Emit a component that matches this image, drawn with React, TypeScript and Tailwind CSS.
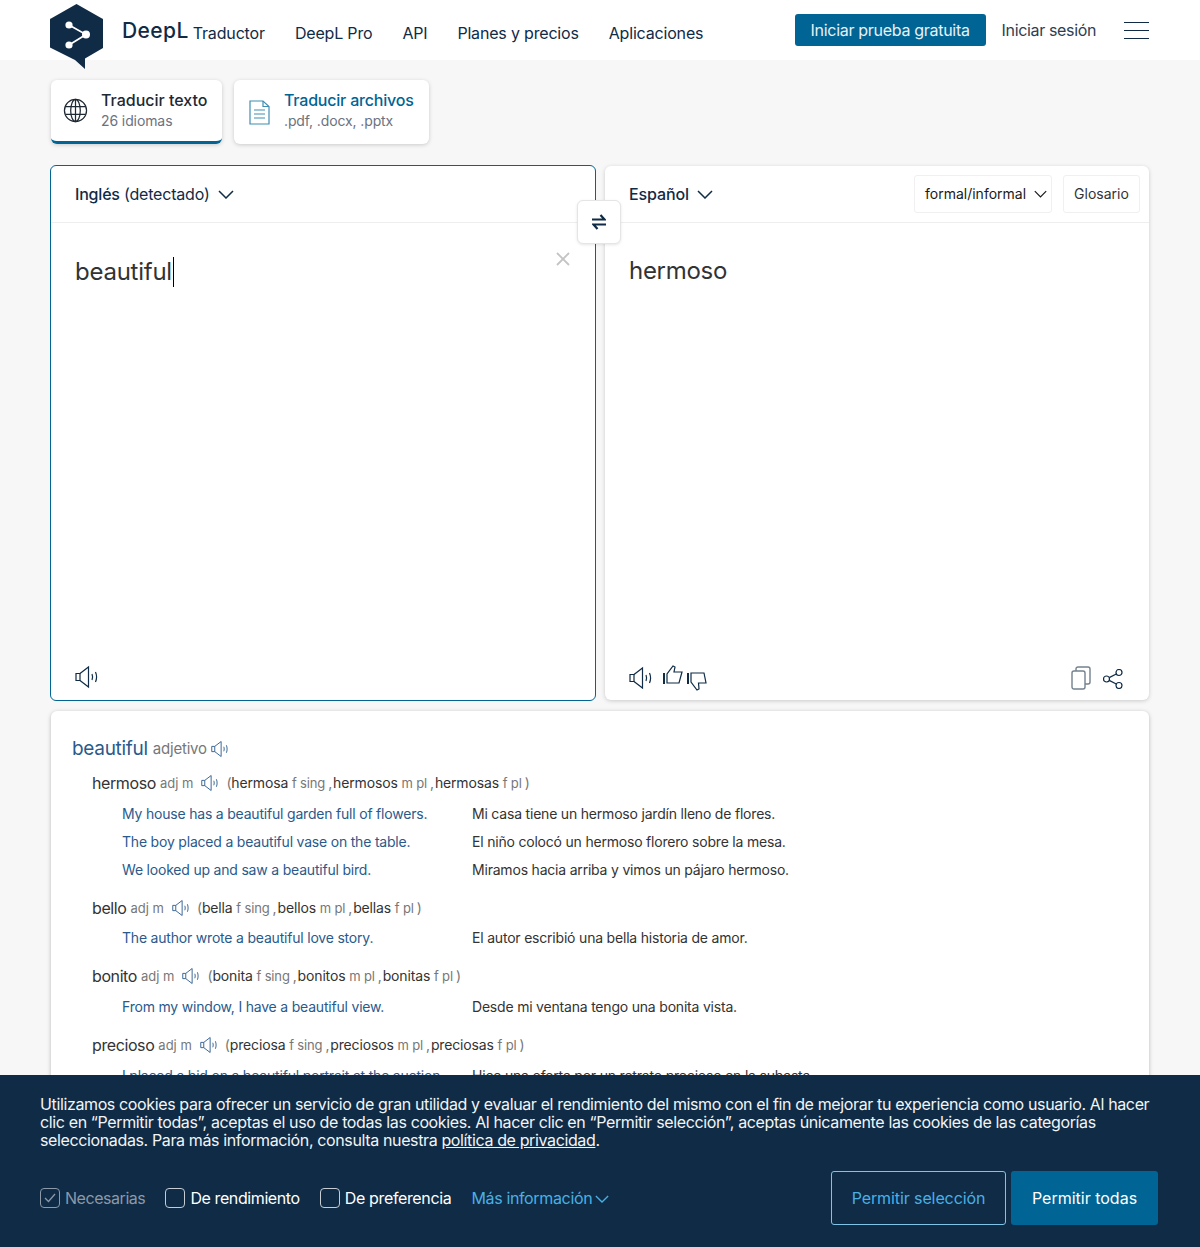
const NAVY = "#0f2b46";

function Speaker({ className }: { className?: string }) {
  return (
    <svg viewBox="0 0 24 24" fill="none" stroke="currentColor" strokeWidth="1.2" className={className}>
      <path d="M1 8.5h4v7H1z" />
      <path d="M5 8.5 13.5 2v20L5 15.5" />
      <path d="M17 9c.8 2 .8 4 0 6" />
      <path d="M20.5 7c1.3 3 1.3 7 0 10" />
    </svg>
  );
}

function Chevron({ className }: { className?: string }) {
  return (
    <svg viewBox="0 0 16 9" fill="none" stroke="currentColor" strokeWidth="1.5" className={className}>
      <path d="M1 1l7 7 7-7" />
    </svg>
  );
}

function Logo() {
  return (
    <svg viewBox="0 0 53 65" className="h-[65px] w-[53px] shrink-0">
      <path d="M26.5 0 52 14.5a1 1 0 0 1 1 1V44L35 54.5V65L25 56 1 44a1 1 0 0 1-1-1V15.5a1 1 0 0 1 1-1z" fill={NAVY} />
      <path d="M19 21 36 30.5 19 41" fill="none" stroke="#fff" strokeWidth="1.7" />
      <circle cx="19" cy="21" r="3.6" fill="#fff" />
      <circle cx="36" cy="30.5" r="4" fill="#fff" />
      <circle cx="19" cy="41" r="3.6" fill="#fff" />
    </svg>
  );
}

function Header() {
  return (
    <header className="flex h-[60px] items-center bg-white pl-[50px] pr-[51px]">
      <div className="mt-[21px] h-[73px] shrink-0">
        <Logo />
      </div>
      <span className="ml-[19px] mt-[1px] text-[21px] font-medium tracking-[0.4px] text-[#0f2b46]">DeepL</span>
      <span className="ml-[4px] mt-[5px] text-base tracking-[-0.15px] text-[#0f2b46]">Traductor</span>
      <nav className="ml-[30px] mt-[5px] flex gap-[30px] text-base tracking-[-0.18px] text-[#0f2b46]">
        <span>DeepL Pro</span>
        <span>API</span>
        <span>Planes y precios</span>
        <span>Aplicaciones</span>
      </nav>
      <button className="ml-auto h-8 w-[191px] rounded-[3px] bg-[#006494] text-base tracking-[-0.3px] text-[#e8f1f6]">
        Iniciar prueba gratuita
      </button>
      <span className="ml-4 text-base tracking-[-0.35px] text-[#2d3e52]">Iniciar sesión</span>
      <div className="ml-7 flex w-[25px] flex-col gap-[7px]">
        <i className="h-px bg-[#0f2b46]" />
        <i className="h-px bg-[#0f2b46]" />
        <i className="h-px bg-[#0f2b46]" />
      </div>
    </header>
  );
}

function Tabs() {
  return (
    <div className="flex gap-3 pl-[51px] pt-5">
      <div className="flex h-16 w-[171px] items-center gap-[13px] overflow-hidden rounded-md border-b-[3px] border-[#006494] bg-white pl-3 shadow-[0_1px_4px_rgba(0,0,0,0.18)]">
        <svg viewBox="0 0 26 26" fill="none" stroke="#1f2933" strokeWidth="1.3" className="h-[25px] w-[25px]">
          <circle cx="13" cy="13" r="11.5" />
          <ellipse cx="13" cy="13" rx="5" ry="11.5" />
          <path d="M2.5 9h21M2.5 17h21M13 1.5v23" />
        </svg>
        <div>
          <div className="text-base leading-5 font-medium text-[#1f2933]">Traducir texto</div>
          <div className="mt-px text-sm leading-5 tracking-[-0.1px] text-[#6b7280]">26 idiomas</div>
        </div>
      </div>
      <div className="flex h-16 w-[195px] items-center gap-[14px] rounded-md bg-white pb-1 pl-[15px] shadow-[0_1px_4px_rgba(0,0,0,0.18)]">
        <svg viewBox="0 0 21 25" fill="none" stroke="#3f8db3" strokeWidth="1.2" className="mt-1 h-[25px] w-[21px]">
          <path d="M1 1h13l6 5.5V24H1z" />
          <path d="M14 1v5.5h6M5 10h11M5 14h11M5 18h11" />
        </svg>
        <div>
          <div className="text-base leading-5 font-medium tracking-[-0.2px] text-[#006494]">Traducir archivos</div>
          <div className="mt-px text-sm leading-5 tracking-[-0.12px] text-[#6b7280]">.pdf, .docx, .pptx</div>
        </div>
      </div>
    </div>
  );
}

function SourcePanel() {
  return (
    <section className="flex h-[536px] w-[546px] flex-col rounded-md border border-[#006494] bg-white">
      <div className="flex h-[57px] shrink-0 items-center gap-2 border-b border-[#eeeeee] pl-6 text-base tracking-[-0.2px] text-[#0f2b46]">
        <span>
          <span className="font-medium">Inglés</span> (detectado)
        </span>
        <Chevron className="h-[9px] w-4" />
      </div>
      <div className="relative flex-1 pl-6 pt-[27px] text-2xl leading-9 tracking-[-0.25px] text-[#333333]">
        beautiful<span className="ml-px inline-block h-[30px] w-px translate-y-[7px] bg-black" />
        <svg viewBox="0 0 14 14" fill="none" stroke="#c4c4c4" strokeWidth="1.8" className="absolute right-[25px] top-[29px] h-[14px] w-[14px]">
          <path d="M1 1l12 12M13 1 1 13" />
        </svg>
      </div>
      <div className="h-[48px] shrink-0 pl-6 pt-[13px]">
        <Speaker className="h-6 w-6 text-[#0f2b46]" />
      </div>
    </section>
  );
}

function TargetPanel() {
  return (
    <section className="mt-px flex h-[534px] w-[544px] flex-col rounded-md bg-white shadow-[0_1px_4px_rgba(0,0,0,0.18)]">
      <div className="flex h-[57px] shrink-0 items-center gap-2 border-b border-[#eeeeee] pl-6 pr-[9px] text-base text-[#0f2b46]">
        <span className="font-medium tracking-[-0.1px]">Español</span>
        <Chevron className="h-[9px] w-4" />
        <div className="ml-auto flex h-[38px] w-[138px] items-center gap-2 rounded-[3px] border border-[#f0f0f0] pl-[10px] text-sm text-[#1a1a1a]">
          formal/informal
          <Chevron className="h-2 w-[13px]" />
        </div>
        <div className="ml-[3px] flex h-[38px] w-[77px] items-center justify-center rounded-[3px] border border-[#f0f0f0] text-sm text-[#333333]">
          Glosario
        </div>
      </div>
      <div className="flex-1 pl-6 pt-[30px] text-2xl leading-9 tracking-[-0.3px] text-[#333333]">hermoso</div>
      <div className="flex h-[48px] shrink-0 items-start pl-6 pr-[26px] pt-3 text-[#0f2b46]">
        <Speaker className="mt-[2px] h-6 w-6" />
        <svg viewBox="0 0 22 22" fill="none" stroke="currentColor" strokeWidth="1.2" className="ml-[9px] h-[22px] w-[22px]">
          <path d="M2 9v11" strokeWidth="2" />
          <path d="M5 19V10l6-8 2 1-1 5h8l-3 11z" />
        </svg>
        <svg viewBox="0 0 22 22" fill="none" stroke="currentColor" strokeWidth="1.2" className="ml-[2px] mt-[6px] h-[22px] w-[22px]">
          <path d="M2 3v11" strokeWidth="2" />
          <path d="M5 3v9l6 8 2-1-.5-6H20L18 3z" />
        </svg>
        <svg viewBox="0 0 20 24" fill="none" stroke="#73818f" strokeWidth="1.4" className="ml-auto mt-[2px] h-6 w-5">
          <rect x="1" y="5" width="13" height="18" rx="2" />
          <path d="M5 5V3a2 2 0 0 1 2-2h10a2 2 0 0 1 2 2v13a2 2 0 0 1-2 2h-3" />
        </svg>
        <svg viewBox="0 0 20 20" fill="none" stroke="currentColor" strokeWidth="1.2" className="ml-3 mt-[5px] h-5 w-5">
          <circle cx="3.5" cy="10" r="3" />
          <circle cx="16" cy="3.5" r="3" />
          <circle cx="16" cy="16.5" r="3" />
          <path d="M6.2 8.6 13.3 5M6.2 11.4l7.1 3.6" />
        </svg>
      </div>
    </section>
  );
}

type Form = { word: string; tag: string };

function Entry({
  word,
  forms,
  examples,
  mt,
  gap = "mt-[11px]",
}: {
  word: string;
  forms: Form[];
  examples: [string, string][];
  mt: string;
  gap?: string;
}) {
  return (
    <div className={mt}>
      <div className="flex h-5 items-center pl-[41px] text-sm tracking-[-0.15px] whitespace-nowrap">
        <span className="text-base tracking-[-0.4px] text-[#333333]">{word}</span>
        <span className="ml-1 text-[13px] tracking-normal text-[#777777]">adj m</span>
        <Speaker className="ml-[8px] h-[18px] w-[18px] text-[#2a5a8c]" />
        <span className="ml-[7px] text-[#777777]">(</span>
        <span>
          {forms.map((f, i) => (
            <span key={f.word} className="text-[#333333]">
              {f.word} <span className="text-[13px] text-[#777777]">{f.tag}</span>
              <span className="ml-[3px] mr-px text-[#777777]">{i < forms.length - 1 ? "," : ")"}</span>
            </span>
          ))}
        </span>
      </div>
      <div className={`${gap} flex flex-col gap-2`}>
        {examples.map(([en, es]) => (
          <div key={en} className="flex h-5 items-center pl-[71px] text-sm tracking-[-0.2px] whitespace-nowrap">
            <span className="w-[350px] text-[#2a5a8c]">{en}</span>
            <span className="text-[#333333]">{es}</span>
          </div>
        ))}
      </div>
    </div>
  );
}

function Dictionary() {
  return (
    <section className="mt-[10px] h-[500px] w-[1098px] rounded-md bg-white pt-[26px] shadow-[0_1px_4px_rgba(0,0,0,0.25)]">
      <div className="flex h-6 items-center pl-[21px]">
        <span className="text-[19px] tracking-[-0.3px] text-[#2a5a8c]">beautiful</span>
        <span className="ml-[5px] mt-px text-[15px] tracking-[-0.2px] text-[#777777]">adjetivo</span>
        <Speaker className="ml-[4px] h-[18px] w-[18px] text-[#2a5a8c]" />
      </div>
      <Entry
        mt="mt-[12px]"
        word="hermoso"
        forms={[
          { word: "hermosa", tag: "f sing" },
          { word: "hermosos", tag: "m pl" },
          { word: "hermosas", tag: "f pl" },
        ]}
        examples={[
          ["My house has a beautiful garden full of flowers.", "Mi casa tiene un hermoso jardín lleno de flores."],
          ["The boy placed a beautiful vase on the table.", "El niño colocó un hermoso florero sobre la mesa."],
          ["We looked up and saw a beautiful bird.", "Miramos hacia arriba y vimos un pájaro hermoso."],
        ]}
      />
      <Entry
        mt="mt-[18px]"
        gap="mt-[10px]"
        word="bello"
        forms={[
          { word: "bella", tag: "f sing" },
          { word: "bellos", tag: "m pl" },
          { word: "bellas", tag: "f pl" },
        ]}
        examples={[["The author wrote a beautiful love story.", "El autor escribió una bella historia de amor."]]}
      />
      <Entry
        mt="mt-[18px]"
        word="bonito"
        forms={[
          { word: "bonita", tag: "f sing" },
          { word: "bonitos", tag: "m pl" },
          { word: "bonitas", tag: "f pl" },
        ]}
        examples={[["From my window, I have a beautiful view.", "Desde mi ventana tengo una bonita vista."]]}
      />
      <Entry
        mt="mt-[18px]"
        word="precioso"
        forms={[
          { word: "preciosa", tag: "f sing" },
          { word: "preciosos", tag: "m pl" },
          { word: "preciosas", tag: "f pl" },
        ]}
        examples={[
          ["I placed a bid on a beautiful portrait at the auction.", "Hice una oferta por un retrato precioso en la subasta."],
        ]}
      />
    </section>
  );
}

function CookieBanner() {
  return (
    <div className="absolute inset-x-0 bottom-0 h-[172px] bg-[#0f2b46] pl-10 pr-[42px] pt-[20px] text-white">
      <p className="text-base leading-[18px] tracking-[-0.37px] text-[#f2f5f7]">
        Utilizamos cookies para ofrecer un servicio de gran utilidad y evaluar el rendimiento del mismo con el fin de mejorar tu experiencia como usuario. Al hacer clic en “Permitir todas”, aceptas el uso de todas las cookies. Al hacer clic en “Permitir selección”, aceptas únicamente las cookies de las categorías seleccionadas. Para más información, consulta nuestra{" "}
        <span className="underline">política de privacidad</span>.
      </p>
      <div className="mt-[22px] flex items-center text-base tracking-[-0.35px]">
        <span className="flex h-5 w-5 items-center justify-center rounded-[4px] border border-[#8b99a8]">
          <svg viewBox="0 0 12 10" fill="none" stroke="#8b99a8" strokeWidth="1.3" className="h-[10px] w-3">
            <path d="M1 5l3.5 3.5L11 1" />
          </svg>
        </span>
        <span className="ml-[5px] tracking-[-0.45px] text-[#8b99a8]">Necesarias</span>
        <span className="ml-5 h-5 w-5 rounded-[4px] border border-[#c5ccd3]" />
        <span className="ml-[5px] tracking-[-0.4px]">De rendimiento</span>
        <span className="ml-5 h-5 w-5 rounded-[4px] border border-[#c5ccd3]" />
        <span className="ml-[5px]">De preferencia</span>
        <span className="ml-5 text-[#4ab0e4]">Más información</span>
        <Chevron className="ml-[3px] mt-[2px] h-2 w-[14px] text-[#4ab0e4]" />
        <button className="ml-auto h-[54px] w-[175px] rounded-[3px] border border-[#7fc4e8] tracking-[-0.1px] text-[#4ab0e4]">
          Permitir selección
        </button>
        <button className="ml-[5px] h-[54px] w-[147px] rounded-[3px] bg-[#006494] tracking-normal text-white">
          Permitir todas
        </button>
      </div>
    </div>
  );
}

export default function App() {
  return (
    <div className="relative h-[1247px] overflow-hidden bg-[#f7f7f7] font-['Inter',sans-serif]">
      <Header />
      <Tabs />
      <div className="relative mt-[21px] flex gap-[9px] pl-[50px]">
        <SourcePanel />
        <TargetPanel />
        <button className="absolute left-[577px] top-[35px] flex h-[44px] w-[44px] items-center justify-center rounded-md border border-[#e5e5e5] bg-white shadow-[0_1px_3px_rgba(0,0,0,0.1)]">
          <svg viewBox="0 0 14 16" fill="none" stroke={NAVY} strokeWidth="2.2" className="h-4 w-[14px]">
            <path d="M0 5.5h12.5L8.5 1M14 10.5H1.5L5.5 15" />
          </svg>
        </button>
      </div>
      <div className="pl-[51px]">
        <Dictionary />
      </div>
      <CookieBanner />
    </div>
  );
}
